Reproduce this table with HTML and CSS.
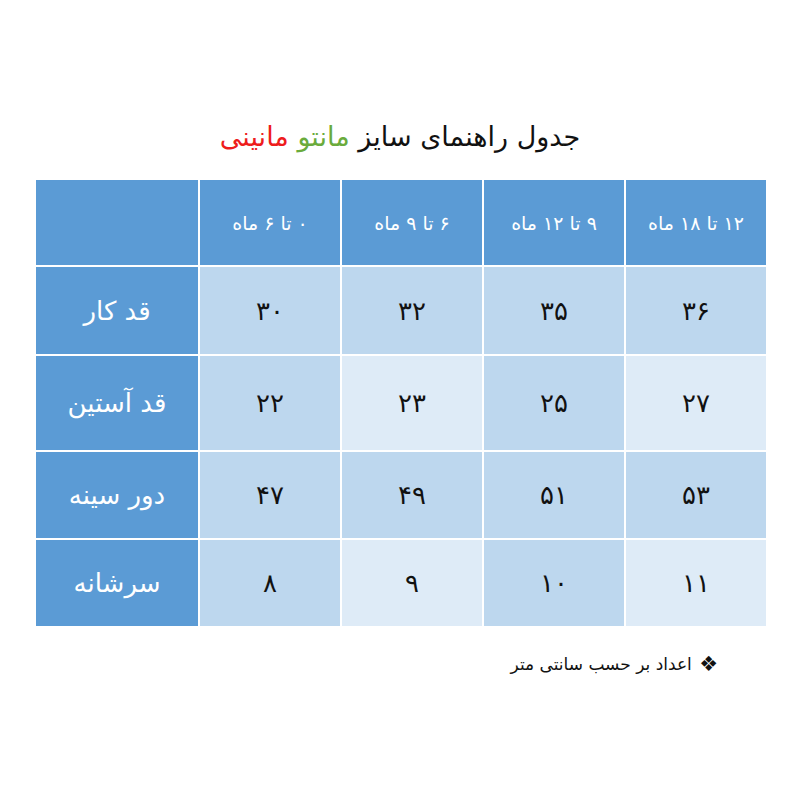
FILE: index.html
```html
<!DOCTYPE html>
<html lang="fa">
<head>
<meta charset="utf-8">
<title>جدول راهنمای سایز</title>
<link rel="stylesheet" href="styles.css">
</head>
<body>
<div class="page">
  <h1 class="title"><span class="black">جدول راهنمای سایز </span><span class="green">مانتو</span> <span class="red">مانینی</span></h1>
  <div class="table">
    <div class="cell head"></div>
    <div class="cell head">۰ تا ۶ ماه</div>
    <div class="cell head">۶ تا ۹ ماه</div>
    <div class="cell head">۹ تا ۱۲ ماه</div>
    <div class="cell head">۱۲ تا ۱۸ ماه</div>

    <div class="cell label">قد کار</div>
    <div class="cell dark">۳۰</div>
    <div class="cell dark">۳۲</div>
    <div class="cell dark">۳۵</div>
    <div class="cell dark">۳۶</div>

    <div class="cell label">قد آستین</div>
    <div class="cell dark">۲۲</div>
    <div class="cell light">۲۳</div>
    <div class="cell dark">۲۵</div>
    <div class="cell light">۲۷</div>

    <div class="cell label">دور سینه</div>
    <div class="cell dark">۴۷</div>
    <div class="cell dark">۴۹</div>
    <div class="cell dark">۵۱</div>
    <div class="cell dark">۵۳</div>

    <div class="cell label">سرشانه</div>
    <div class="cell dark">۸</div>
    <div class="cell light">۹</div>
    <div class="cell dark">۱۰</div>
    <div class="cell light">۱۱</div>
  </div>
  <p class="note"><span class="bullet">❖</span> اعداد بر حسب سانتی متر</p>
</div>
</body>
</html>
```
FILE: styles.css
```css
html, body {
  margin: 0;
  padding: 0;
  background: #ffffff;
}
.page {
  width: 800px;
  height: 800px;
  padding-top: 112px;
  box-sizing: border-box;
  font-family: "DejaVu Sans", sans-serif;
}
.title {
  margin: 0;
  height: 68px;
  direction: rtl;
  text-align: center;
  font-weight: normal;
  font-size: 27px;
  line-height: 50px;
  color: #111;
}
.green { color: #6aab3c; }
.red { color: #ee1c1c; }
.table {
  margin-left: 36px;
  width: 730px;
  display: grid;
  grid-template-columns: 162px 140px 140px 140px 140px;
  grid-template-rows: 85px 87px 94px 86px 86px;
  gap: 2px;
  background: #ffffff;
}
.cell {
  display: flex;
  align-items: center;
  justify-content: center;
  direction: rtl;
  color: #111;
  font-size: 26px;
}
.head {
  background: #5b9bd5;
  color: #ffffff;
  font-size: 19px;
}
.label {
  background: #5b9bd5;
  color: #ffffff;
  font-size: 26px;
}
.dark { background: #bdd7ee; }
.light { background: #deebf7; }
.note {
  margin: 26px 82px 0 0;
  direction: rtl;
  font-size: 17px;
  line-height: 24px;
  color: #111;
}
.bullet {
  font-size: 21px;
  margin-left: 2px;
  vertical-align: -1px;
}
```
